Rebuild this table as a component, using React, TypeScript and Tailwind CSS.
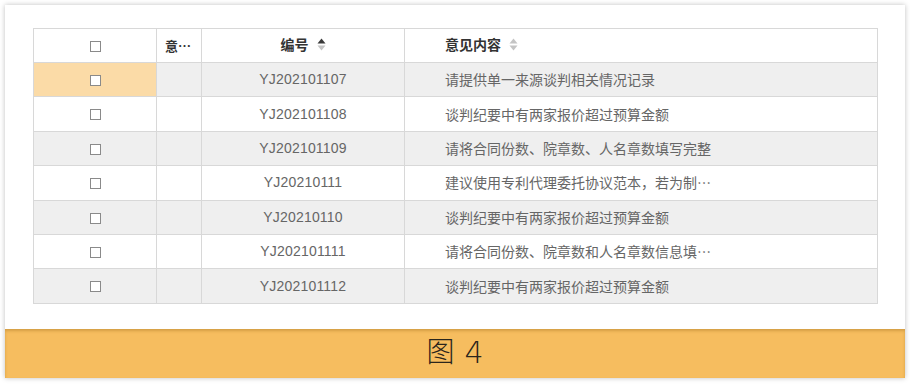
import React from 'react';

const rows = [
  { id: 'YJ202101107', text: '请提供单一来源谈判相关情况记录' },
  { id: 'YJ202101108', text: '谈判纪要中有两家报价超过预算金额' },
  { id: 'YJ202101109', text: '请将合同份数、院章数、人名章数填写完整' },
  { id: 'YJ20210111', text: '建议使用专利代理委托协议范本，若为制…' },
  { id: 'YJ20210110', text: '谈判纪要中有两家报价超过预算金额' },
  { id: 'YJ202101111', text: '请将合同份数、院章数和人名章数信息填…' },
  { id: 'YJ202101112', text: '谈判纪要中有两家报价超过预算金额' },
];

function Box() {
  return <span className="inline-block w-[11px] h-[11px] border border-[#8a8a8a] bg-white align-middle" />;
}

function SortIcon({ active }: { active?: boolean }) {
  return (
    <svg width="9" height="13" viewBox="0 0 9 13" className="inline-block ml-[8px] align-[-1px]">
      <path d="M4.5 0.5 L8.5 5.5 L0.5 5.5 Z" fill={active ? '#3a3a3a' : '#c4c4c4'} />
      <path d="M4.5 12.5 L8.5 7.5 L0.5 7.5 Z" fill="#c4c4c4" />
    </svg>
  );
}

const cjk = { fontFamily: '"Noto Sans CJK SC", sans-serif' };

export default function App() {
  const cell = 'border border-[#d8d8d8] p-0';
  return (
    <div
      className="w-[910px] h-[387px] bg-white pt-[5px] px-[5px]"
      style={{ fontFamily: '"Liberation Sans", "Noto Sans CJK SC", sans-serif' }}
    >
      <div className="shadow-[0_0_5px_rgba(0,0,0,0.25)]">
        <div className="bg-white pt-[23px] pl-[28px] pr-[27px] pb-[25px]">
          <table className="w-full border-collapse table-fixed text-[14px] text-[#666]">
            <colgroup>
              <col className="w-[123px]" />
              <col className="w-[45px]" />
              <col className="w-[203px]" />
              <col />
            </colgroup>
            <thead>
              <tr className="h-[34px] bg-white">
                <th className={`${cell} text-center font-normal`}>
                  <Box />
                </th>
                <th className={`${cell} text-left pl-[8px] font-bold text-[#333] text-[13px]`} style={cjk}>
                  意…
                </th>
                <th className={`${cell} text-center font-bold text-[#333]`}>
                  编号
                  <SortIcon active />
                </th>
                <th className={`${cell} text-left pl-[40px] font-bold text-[#333]`}>
                  意见内容
                  <SortIcon />
                </th>
              </tr>
            </thead>
            <tbody>
              {rows.map((r, i) => (
                <tr key={r.id} className={`h-[34.4px] ${i % 2 === 0 ? 'bg-[#efefef]' : 'bg-white'}`}>
                  <td className={`${cell} text-center ${i === 0 ? 'bg-[#fbdba7]' : ''}`}>
                    <Box />
                  </td>
                  <td className={cell}></td>
                  <td className={`${cell} text-center tracking-[0.2px]`}>{r.id}</td>
                  <td className={`${cell} pl-[40px] whitespace-nowrap`} style={cjk}>
                    {r.text}
                  </td>
                </tr>
              ))}
            </tbody>
          </table>
        </div>
        <div className="h-[49px] bg-[#f6bd5f] shadow-[inset_0_2px_3px_rgba(150,100,20,0.35)] flex items-center justify-center gap-[10px] text-[#2a251c]">
          <span className="text-[28px] leading-none font-light">图</span>
          <span className="text-[30px] leading-none" style={{ fontFamily: '"DejaVu Sans", sans-serif', fontWeight: 300 }}>
            4
          </span>
        </div>
      </div>
    </div>
  );
}
